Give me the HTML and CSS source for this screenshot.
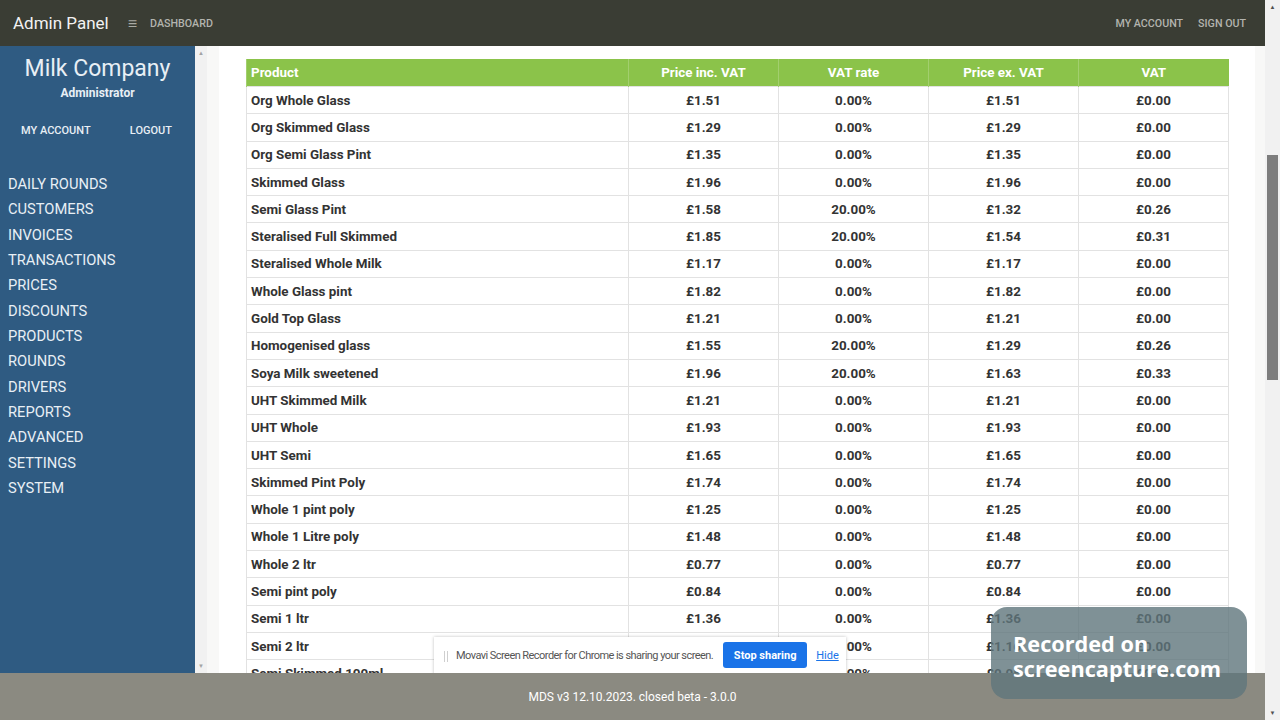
FILE: index.html
```html
<!DOCTYPE html>
<html lang="en">
<head>
    <meta charset="UTF-8">
    <meta name="viewport" content="width=device-width, initial-scale=1.0">
    <title>Admin Panel - Prices</title>
    <link rel="stylesheet" href="styles.css">
</head>
<body>
    <div class="screen">
        <div class="app">
            <header class="topbar">
                <div class="brand">Admin Panel</div>
                <span class="burger">&#8801;</span>
                <a class="top-link">DASHBOARD</a>
                <nav class="top-right">
                    <a class="top-link">MY ACCOUNT</a>
                    <a class="top-link">SIGN OUT</a>
                </nav>
            </header>

            <div class="middle">
                <aside class="sidebar">
                    <div class="company">Milk Company</div>
                    <div class="role">Administrator</div>
                    <div class="account-links">
                        <a>MY ACCOUNT</a>
                        <a>LOGOUT</a>
                    </div>
                    <ul class="menu">
                        <li>DAILY ROUNDS</li>
                        <li>CUSTOMERS</li>
                        <li>INVOICES</li>
                        <li>TRANSACTIONS</li>
                        <li>PRICES</li>
                        <li>DISCOUNTS</li>
                        <li>PRODUCTS</li>
                        <li>ROUNDS</li>
                        <li>DRIVERS</li>
                        <li>REPORTS</li>
                        <li>ADVANCED</li>
                        <li>SETTINGS</li>
                        <li>SYSTEM</li>
                    </ul>
                </aside>
                <div class="side-scroll">
                    <span class="arrow">&#9650;</span>
                    <span class="arrow">&#9660;</span>
                </div>

                <main class="content">
                    <div class="panel">
                        <table class="prices">
                            <colgroup>
                                <col class="col-name">
                                <col class="col-num">
                                <col class="col-num">
                                <col class="col-num">
                                <col class="col-num">
                            </colgroup>
                            <thead>
                                <tr>
                                    <th class="name">Product</th>
                                    <th>Price inc. VAT</th>
                                    <th>VAT rate</th>
                                    <th>Price ex. VAT</th>
                                    <th>VAT</th>
                                </tr>
                            </thead>
                            <tbody id="rows"></tbody>
                        </table>
                    </div>

                    <div class="share-bar">
                        <span class="grip"></span>
                        <span class="share-text">Movavi Screen Recorder for Chrome is sharing your screen.</span>
                        <button class="stop-btn">Stop sharing</button>
                        <a class="hide-link">Hide</a>
                    </div>
                </main>
            </div>

            <footer class="footer">MDS v3 12.10.2023. closed beta - 3.0.0</footer>
        </div>

        <div class="page-scroll">
            <span class="arrow">&#9650;</span>
            <div class="track"><div class="thumb"></div></div>
            <span class="arrow">&#9660;</span>
        </div>
    </div>

    <div class="watermark">Recorded on<br>screencapture.com</div>

    <script>
        const products = [
            ['Org Whole Glass', '£1.51', '0.00%', '£1.51', '£0.00'],
            ['Org Skimmed Glass', '£1.29', '0.00%', '£1.29', '£0.00'],
            ['Org Semi Glass Pint', '£1.35', '0.00%', '£1.35', '£0.00'],
            ['Skimmed Glass', '£1.96', '0.00%', '£1.96', '£0.00'],
            ['Semi Glass Pint', '£1.58', '20.00%', '£1.32', '£0.26'],
            ['Steralised Full Skimmed', '£1.85', '20.00%', '£1.54', '£0.31'],
            ['Steralised Whole Milk', '£1.17', '0.00%', '£1.17', '£0.00'],
            ['Whole Glass pint', '£1.82', '0.00%', '£1.82', '£0.00'],
            ['Gold Top Glass', '£1.21', '0.00%', '£1.21', '£0.00'],
            ['Homogenised glass', '£1.55', '20.00%', '£1.29', '£0.26'],
            ['Soya Milk sweetened', '£1.96', '20.00%', '£1.63', '£0.33'],
            ['UHT Skimmed Milk', '£1.21', '0.00%', '£1.21', '£0.00'],
            ['UHT Whole', '£1.93', '0.00%', '£1.93', '£0.00'],
            ['UHT Semi', '£1.65', '0.00%', '£1.65', '£0.00'],
            ['Skimmed Pint Poly', '£1.74', '0.00%', '£1.74', '£0.00'],
            ['Whole 1 pint poly', '£1.25', '0.00%', '£1.25', '£0.00'],
            ['Whole 1 Litre poly', '£1.48', '0.00%', '£1.48', '£0.00'],
            ['Whole 2 ltr', '£0.77', '0.00%', '£0.77', '£0.00'],
            ['Semi pint poly', '£0.84', '0.00%', '£0.84', '£0.00'],
            ['Semi 1 ltr', '£1.36', '0.00%', '£1.36', '£0.00'],
            ['Semi 2 ltr', '£1.16', '0.00%', '£1.16', '£0.00'],
            ['Semi Skimmed 100ml', '£0.05', '0.00%', '£0.05', '£0.00']
        ];

        const tbody = document.getElementById('rows');
        products.forEach(p => {
            const tr = document.createElement('tr');
            tr.innerHTML = `<td class="name">${p[0]}</td><td>${p[1]}</td><td>${p[2]}</td><td>${p[3]}</td><td>${p[4]}</td>`;
            tbody.appendChild(tr);
        });
    </script>
</body>
</html>
```

FILE: styles.css
```css
body {
    margin: 0;
    font-family: 'Roboto', 'Liberation Sans', sans-serif;
    overflow: hidden;
    background: #f1f1f1;
}

a {
    cursor: pointer;
}

.screen {
    display: flex;
    width: 1280px;
    height: 720px;
}

.app {
    flex: 1;
    display: flex;
    flex-direction: column;
    min-width: 0;
}

/* top navigation */
.topbar {
    height: 46px;
    flex-shrink: 0;
    background-color: #3a3d34;
    display: flex;
    align-items: center;
    padding: 0 19px 0 13px;
}

.brand {
    color: #f2f2f2;
    font-size: 17px;
    margin-right: 19px;
}

.burger {
    color: #a9aba4;
    font-size: 16px;
    margin-right: 13px;
}

.top-link {
    color: #b3b4ae;
    font-size: 10.7px;
    font-weight: 500;
}

.top-right {
    margin-left: auto;
    display: flex;
    gap: 15px;
}

.middle {
    flex: 1;
    display: flex;
    min-height: 0;
}

/* sidebar */
.sidebar {
    width: 195px;
    flex-shrink: 0;
    background-color: #2f5b82;
    color: #e8eff5;
}

.company {
    font-size: 23px;
    text-align: center;
    margin-top: 9px;
}

.role {
    font-size: 12px;
    font-weight: 700;
    text-align: center;
    margin-top: 4px;
}

.account-links {
    display: flex;
    justify-content: space-between;
    padding: 0 23px 0 21px;
    margin-top: 24px;
    font-size: 11px;
    font-weight: 500;
}

.menu {
    list-style: none;
    margin: 35px 0 0;
    padding: 0 0 0 8px;
}

.menu li {
    font-size: 14.7px;
    height: 25.33px;
    line-height: 25.33px;
}

.side-scroll,
.page-scroll {
    background: #f1f1f1;
    display: flex;
    flex-direction: column;
    justify-content: space-between;
    align-items: center;
    flex-shrink: 0;
}

.side-scroll {
    width: 12px;
}

.page-scroll {
    width: 15px;
}

.arrow {
    font-size: 6px;
    color: #a3a3a3;
    line-height: 14px;
}

.page-scroll .arrow {
    color: #505050;
}

.track {
    flex: 1;
    width: 100%;
}

.thumb {
    width: 11px;
    height: 225px;
    margin: 141px auto 0;
    background: #7d7d7d;
}

/* content */
.content {
    flex: 1;
    background: #f8f8f7;
    padding: 0 10px 0 12px;
    overflow: hidden;
    position: relative;
}

.panel {
    background: white;
    height: 100%;
    padding: 13px 27px 0;
}

.prices {
    width: 982px;
    table-layout: fixed;
    border-collapse: collapse;
    color: #333;
    font-size: 13.4px;
    font-weight: 700;
}

.col-name {
    width: 382px;
}

.col-num {
    width: 150px;
}

.prices th {
    background-color: #8bc34a;
    color: white;
    height: 27px;
    padding: 0 4px;
    border-left: 1px solid #a2cf6e;
    text-align: center;
}

.prices td {
    height: 27.3px;
    padding: 0 4px;
    border: 1px solid #e2e2e2;
    text-align: center;
    box-sizing: border-box;
    white-space: nowrap;
}

.prices .name {
    text-align: left;
}

/* screen-share notice injected into the page */
.share-bar {
    position: absolute;
    left: 227px;
    top: 591px;
    width: 412px;
    height: 44px;
    background: white;
    box-shadow: 0 0 3px rgba(0, 0, 0, 0.25);
    display: flex;
    align-items: flex-start;
    padding-top: 5px;
    box-sizing: border-box;
    white-space: nowrap;
}

.grip {
    width: 2px;
    height: 11px;
    margin: 9px 0 0 10px;
    border-left: 1px solid #cfcfcf;
    border-right: 1px solid #cfcfcf;
}

.share-text {
    color: #555;
    font-size: 11px;
    letter-spacing: -0.55px;
    margin: 7px 0 0 8px;
}

.stop-btn {
    background: #1a73e8;
    color: white;
    border: none;
    border-radius: 3px;
    font-family: inherit;
    font-size: 11px;
    font-weight: 700;
    width: 84px;
    height: 26px;
    margin-left: 10px;
    padding: 0;
}

.hide-link {
    color: #1a73e8;
    text-decoration: underline;
    font-size: 11px;
    margin: 7px 0 0 9px;
}

.footer {
    height: 47px;
    flex-shrink: 0;
    background-color: #8b8a81;
    color: white;
    font-size: 12px;
    display: flex;
    align-items: center;
    justify-content: center;
}

.watermark {
    position: absolute;
    left: 991px;
    top: 607px;
    width: 256px;
    height: 92px;
    box-sizing: border-box;
    padding: 24px 0 0 22px;
    border-radius: 16px;
    background: rgba(95, 117, 124, 0.8);
    color: white;
    font-family: 'Open Sans', sans-serif;
    font-size: 21.7px;
    font-weight: 700;
    line-height: 25px;
}
```
